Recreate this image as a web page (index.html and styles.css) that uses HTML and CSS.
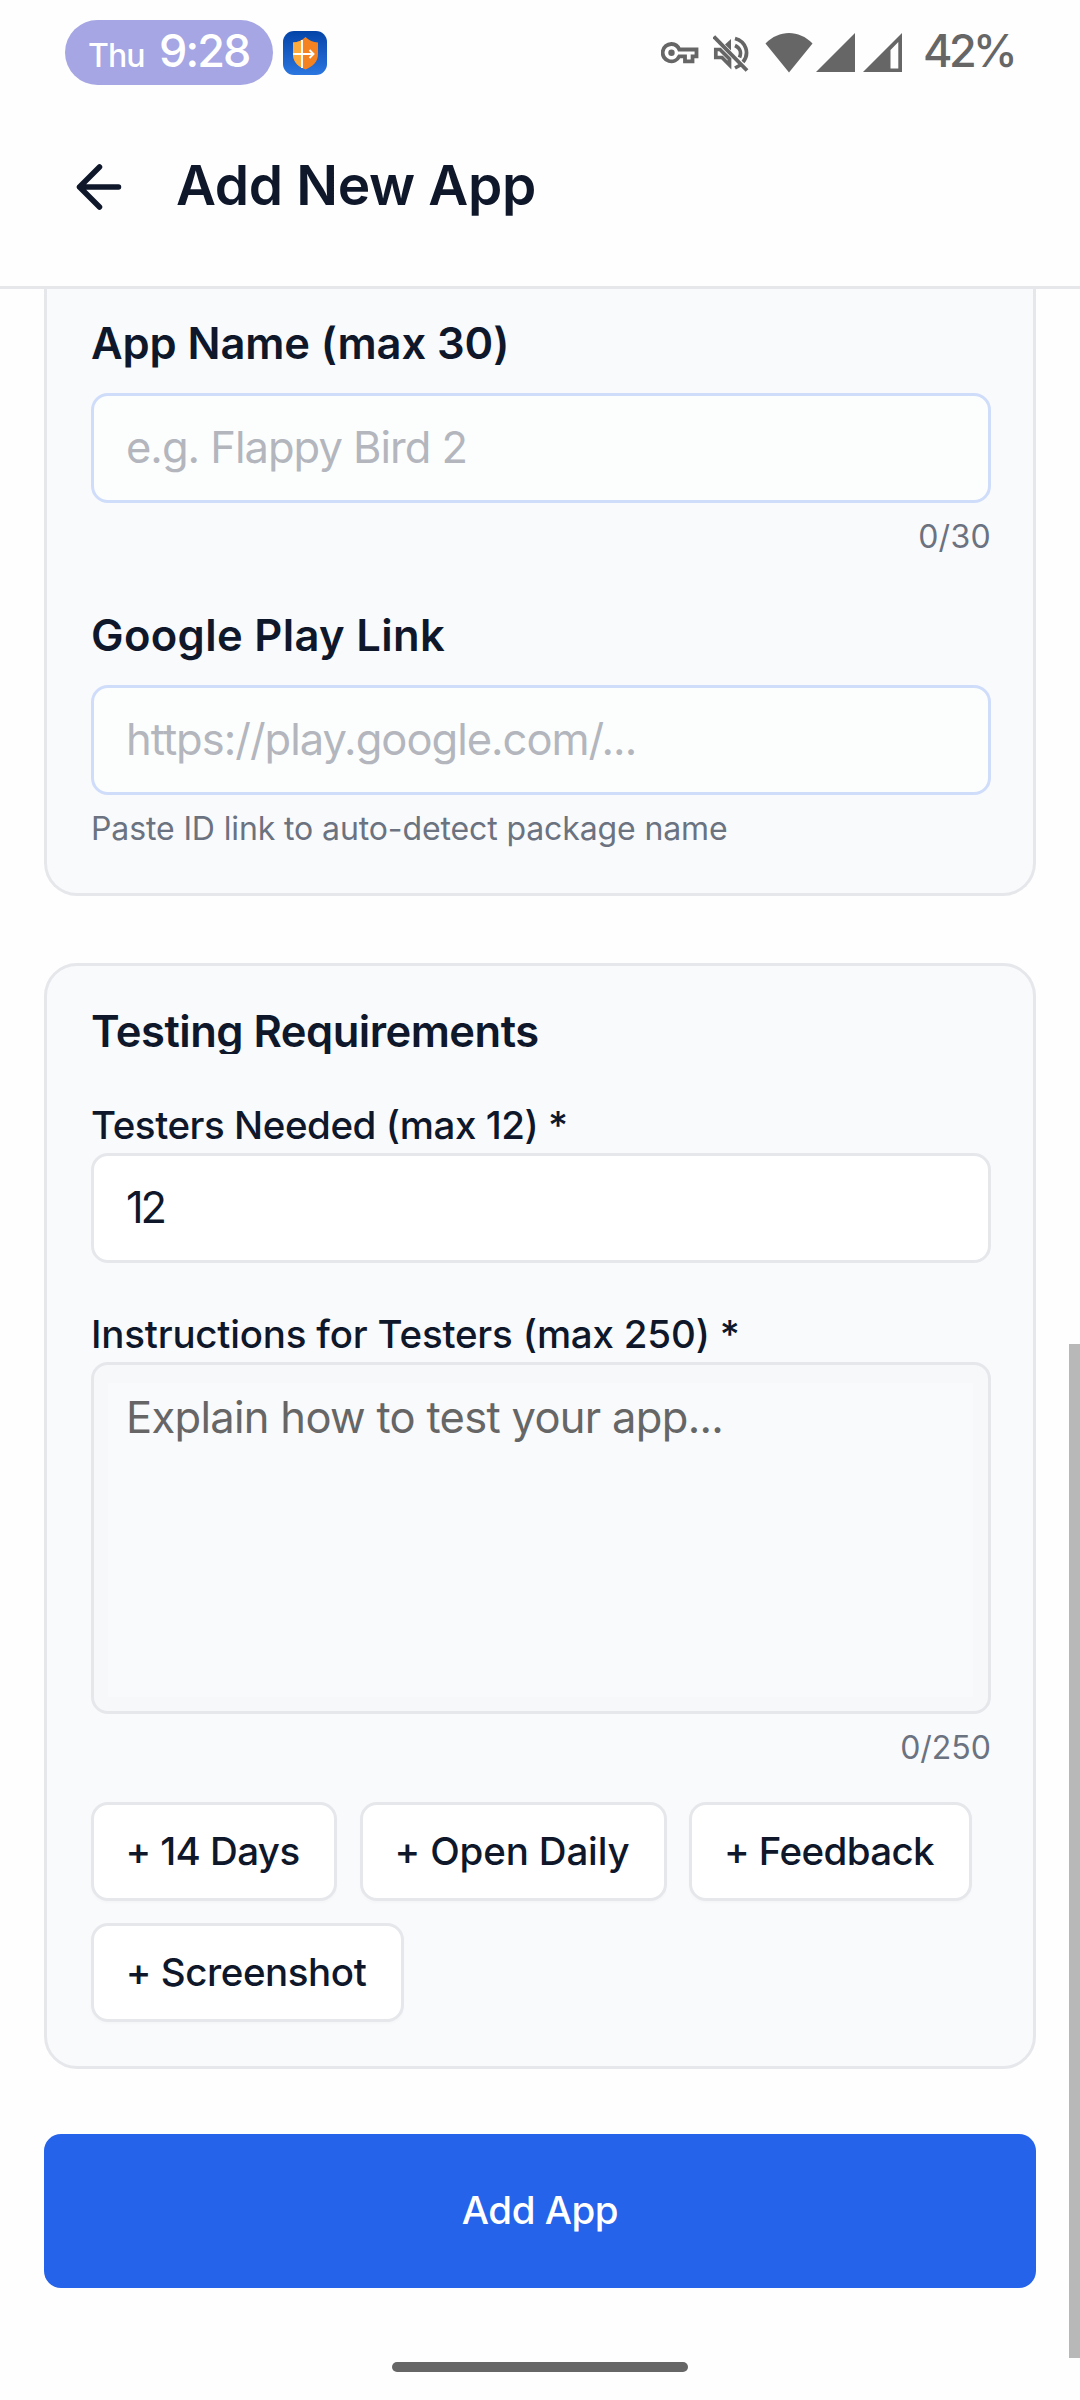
FILE: index.html
```html
<!doctype html>
<html lang="en">
<head>
	<meta charset="utf-8" />
	<title>Add New App</title>
	<link rel="stylesheet" href="styles.css">
</head>
<body>
	<div class="screen">
		<!-- status bar -->
		<div class="status">
			<div class="clock"><span class="day">Thu</span><span class="time">9:28</span></div>
			<svg class="app-icon" width="44" height="44" viewBox="0 0 44 44">
				<defs>
					<linearGradient id="blue" x1="0" y1="0" x2="0" y2="1">
						<stop offset="0" stop-color="#0444a8" />
						<stop offset="1" stop-color="#2b76e0" />
					</linearGradient>
				</defs>
				<rect width="44" height="44" rx="11" fill="url(#blue)" />
				<path d="M22.500 6C19 9.500 15 11 10 11.500V23C10 30.500 15 35.500 22.500 38.500C30 35.500 35 30.500 35 23V11.500C30 11 26 9.500 22.500 6Z" fill="#f58220" />
				<path d="M19 9C16.500 10.500 13.500 11.300 10 11.500V23C10 29.500 13.500 34 19 36.900Z" fill="#fdab3d" />
				<path d="M19 9V37M10 23H30M26.500 19L30.500 23L26.500 27" fill="none" stroke="#fff" stroke-width="1.900" />
			</svg>
			<div class="status-right">
				<svg class="key" width="38" height="22" viewBox="0 0 38 22">
					<path d="M10.500 2A8.700 8.700 0 1 0 18.300 14.300H24V19.300H31.500V14.300H35.500V7.500H18.300A8.700 8.700 0 0 0 10.500 2Z" fill="none" stroke="#666" stroke-width="3.800" />
					<path d="M27.700 13V17" stroke="#fefefe" stroke-width="3" />
					<circle cx="10.500" cy="10.700" r="3.200" fill="#666" />
				</svg>
				<svg class="mute" width="36" height="38" viewBox="0 0 36 38">
					<path d="M2.800 14.500V22.500H9L16.500 30V24L7 14.500Z" fill="none" stroke="#666" stroke-width="3.700" />
					<path d="M12 9.500L18 4V15.500Z" fill="#666" />
					<path d="M22 3.500C33 6.500 37 18.500 30 27M22 10.500C27.500 13 28.500 18 26.500 22.500M22 33L27.500 30" fill="none" stroke="#666" stroke-width="3.700" />
					<path d="M0.800 1.500L34 35.500" stroke="#666" stroke-width="3.900" />
				</svg>
				<svg class="wifi" width="48" height="40" viewBox="0 0 48 40">
					<path d="M0.500 10.500C14 -3.500 34 -3.500 47.500 10.500L24 39.500Z" fill="#666" />
				</svg>
				<svg class="signal" width="39" height="39" viewBox="0 0 39 39">
					<path d="M39 0V39H0Z" fill="#666" />
				</svg>
				<svg class="signal2" width="39" height="39" viewBox="0 0 39 39">
					<path d="M39 0V39H0ZM35.300 9L27.500 17V35.500H35.300Z" fill="#666" fill-rule="evenodd" />
				</svg>
				<span class="battery">42%</span>
			</div>
		</div>

		<!-- title bar -->
		<div class="header">
			<svg class="back" width="46" height="46" viewBox="0 0 46 46">
				<path d="M23.500 3L3.500 23L23.500 43M3.500 23H42.500" fill="none" stroke="#0f172a" stroke-width="5.500" stroke-linecap="round" stroke-linejoin="round" />
			</svg>
			<h1>Add New App</h1>
		</div>

		<div class="content">
			<div class="card card-app">
				<h2 class="name">App Name (max 30)</h2>
				<div class="input blue"><span class="ph">e.g. Flappy Bird 2</span></div>
				<p class="count c30">0/30</p>
				<h2 class="link">Google Play Link</h2>
				<div class="input blue"><span class="ph">https://play.google.com/...</span></div>
				<p class="hint">Paste ID link to auto-detect package name</p>
			</div>

			<div class="card card-test">
				<h2 class="testing">Testing Requirements</h2>
				<label class="needed">Testers Needed (max 12) *</label>
				<div class="input"><span class="val">12</span></div>
				<label class="instr">Instructions for Testers (max 250) *</label>
				<div class="textarea"><span>Explain how to test your app...</span></div>
				<p class="count">0/250</p>
				<div class="chips">
					<a class="chip days">+ 14 Days</a>
					<a class="chip open">+ Open Daily</a>
					<a class="chip feed">+ Feedback</a>
					<a class="chip shot">+ Screenshot</a>
				</div>
			</div>

			<div class="submit">Add App</div>
		</div>

		<div class="home"></div>
		<div class="scrollbar"></div>
	</div>
</body>
</html>
```
FILE: styles.css
```css
* {
	margin: 0;
	padding: 0;
	box-sizing: border-box;
}
body {
	background-color: #fefefe;
	color: #0f172a;
	font-family: Inter, Roboto, sans-serif;
}
svg {
	display: block;
	flex: none;
}
.screen {
	width: 1080px;
	height: 2400px;
	position: relative;
	overflow: hidden;
	display: flex;
	flex-direction: column;
}
/* status bar */
.status {
	height: 106px;
	padding: 20px 66px 0 65px;
	display: flex;
	align-items: flex-start;
	flex: none;
}
.clock {
	width: 208px;
	height: 65px;
	padding-left: 23px;
	border-radius: 33px;
	background-color: #a5a6e3;
	color: #fff;
	font-weight: 500;
	line-height: 62px;
	display: flex;
	white-space: nowrap;
}
.day {
	width: 71px;
	font-size: 32px;
	letter-spacing: -1px;
	line-height: 71px;
}
.time {
	font-size: 45px;
	letter-spacing: -1.9px;
}
.app-icon {
	margin: 11px 0 0 10px;
}
.status-right {
	margin-left: auto;
	display: flex;
	color: #666;
}
.key {
	margin: 22px 14px 0 0;
}
.mute {
	margin: 15px 16px 0 0;
}
.wifi {
	margin: 13px 3px 0 0;
}
.signal {
	margin: 13px 8px 0 0;
}
.signal2 {
	margin: 13px 21px 0 0;
}
.battery {
	width: 91px;
	font-size: 45px;
	font-weight: 500;
	letter-spacing: -3.6px;
	line-height: 62px;
}
/* title bar */
.header {
	height: 183px;
	padding: 49px 0 0 76px;
	border-bottom: 3px solid #e5e7eb;
	display: flex;
	flex: none;
}
.back {
	margin: 9px 54px 0 0;
}
h1 {
	font-size: 55px;
	font-weight: 600;
	letter-spacing: -0.35px;
	line-height: 60px;
}
/* form */
.content {
	padding: 0 44px;
}
.card {
	padding: 0 42px 0 44px;
	background-color: #f9fafc;
	border: 3px solid #e5e7eb;
	border-radius: 33px;
}
.card-app {
	height: 607px;
	padding-top: 28px;
	border-top: none;
	border-radius: 0 0 33px 33px;
}
.card-test {
	height: 1106px;
	margin-top: 67px;
	padding-top: 39px;
}
h2 {
	font-size: 43.5px;
	font-weight: 600;
	line-height: 52px;
	white-space: nowrap;
}
.name {
	letter-spacing: -0.1px;
}
.link {
	margin-top: 52px;
	letter-spacing: 0.35px;
}
.testing {
	height: 49px;
	overflow: hidden;
	letter-spacing: -0.5px;
}
.input {
	height: 110px;
	padding-left: 32px;
	background-color: #fff;
	border: 3px solid #e5e7eb;
	border-radius: 17px;
	font-size: 43.5px;
	line-height: 103px;
}
.blue {
	margin-top: 24px;
	background-color: #fcfefd;
	border-color: #cfddfb;
}
.ph {
	color: #b4b6be;
	letter-spacing: -1px;
}
.val {
	letter-spacing: -3.2px;
}
.count,
.hint {
	color: #6b7280;
	font-size: 32px;
	line-height: 40px;
}
.count {
	margin-top: 14px;
	text-align: right;
}
.c30 {
	letter-spacing: 0.3px;
}
.hint {
	margin-top: 14px;
	letter-spacing: -0.12px;
}
label {
	display: block;
	margin: 48px 0 5px;
	font-size: 38.5px;
	font-weight: 500;
	line-height: 46px;
	white-space: nowrap;
}
.needed {
	letter-spacing: -0.45px;
}
.instr {
	letter-spacing: -0.2px;
}
.textarea {
	height: 352px;
	padding: 22px 30px 0 32px;
	border: 3px solid #e5e7eb;
	border-radius: 17px;
	/* lighter middle, slightly darker edge */
	background: linear-gradient(#f9fafc, #f9fafc) 14px 18px / 865px 314px no-repeat #f7f8fa;
	color: #666;
	font-size: 43.5px;
	letter-spacing: -0.7px;
	line-height: 60px;
}
.chips {
	margin-top: 34px;
	display: flex;
	flex-wrap: wrap;
	gap: 22px;
}
.chip {
	height: 99px;
	padding-right: 3px;
	background-color: #fff;
	border: 3px solid #e5e7eb;
	border-radius: 17px;
	box-shadow: 0 2px 3px rgba(0, 0, 0, 0.02);
	font-size: 38.5px;
	font-weight: 500;
	line-height: 92px;
	text-align: center;
	white-space: nowrap;
}
.days {
	width: 246px;
	margin-right: 1px;
	letter-spacing: -0.58px;
}
.open {
	width: 307px;
	letter-spacing: -0.15px;
}
.feed {
	width: 283px;
	letter-spacing: -0.6px;
}
.shot {
	width: 313px;
	letter-spacing: -0.43px;
}
.submit {
	height: 154px;
	margin-top: 65px;
	background-color: #2563eb;
	border-radius: 17px;
	color: #fff;
	font-size: 38.5px;
	font-weight: 500;
	letter-spacing: -0.5px;
	line-height: 153px;
	text-align: center;
}
.home {
	width: 296px;
	height: 10px;
	margin: 74px auto 0;
	background-color: #666;
	border-radius: 5px;
}
.scrollbar {
	width: 11px;
	height: 1014px;
	background-color: #b8b8b8;
	position: absolute;
	top: 1344px;
	right: 0;
}
```
